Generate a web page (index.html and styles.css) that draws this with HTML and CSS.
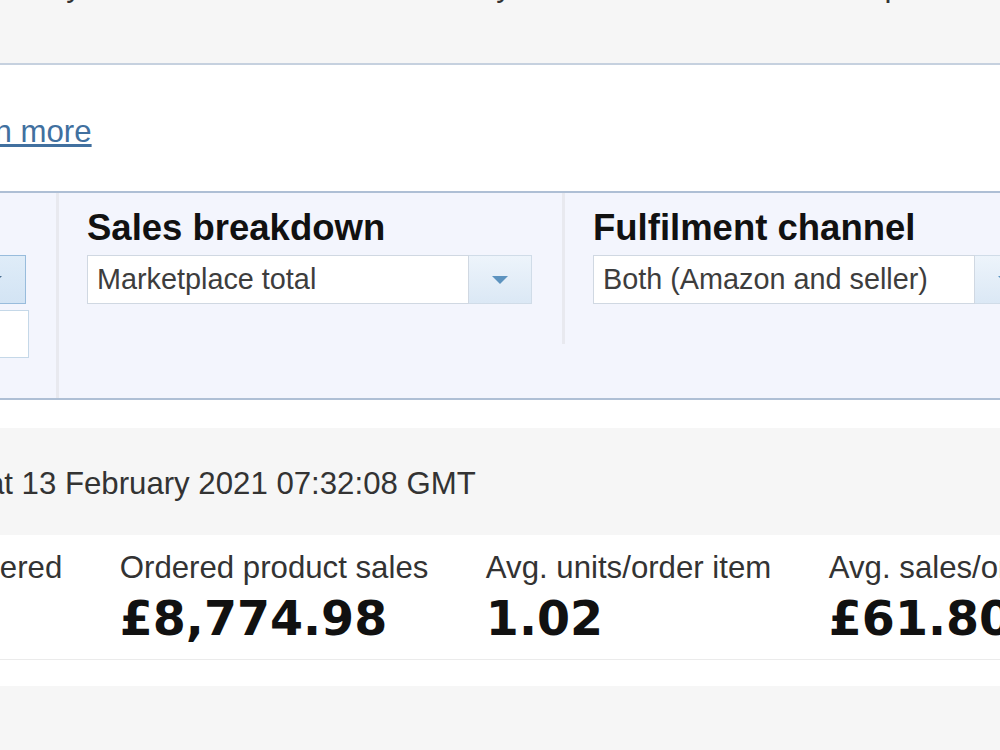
FILE: index.html
```html
<!DOCTYPE html>
<html lang="en">
<head>
    <meta charset="UTF-8">
    <meta name="viewport" content="width=device-width, initial-scale=1.0">
    <title>Sales Dashboard</title>
    <link rel="stylesheet" href="styles.css">
</head>
<body>

<div class="page">
    <div class="intro">
        <p>The snapshot is updated daily. All by the total orders for the last day and the sales in the last report.</p>
    </div>

    <div class="card">
        <p class="help">Data is refreshed hourly. <a href="#">Learn more</a></p>

        <div class="filters">
            <div class="filter">
                <label>Date</label>
                <div class="select focused">
                    <span class="select-text">Today so far</span>
                    <span class="select-btn"><b class="arrow"></b></span>
                </div>
                <input type="text" class="date-input">
            </div>
            <div class="filter">
                <label>Sales breakdown</label>
                <div class="select">
                    <span class="select-text">Marketplace total</span>
                    <span class="select-btn"><b class="arrow"></b></span>
                </div>
            </div>
            <div class="filter">
                <label>Fulfilment channel</label>
                <div class="select">
                    <span class="select-text">Both (Amazon and seller)</span>
                    <span class="select-btn"><b class="arrow"></b></span>
                </div>
            </div>
        </div>
    </div>

    <div class="snapshot">Sales snapshot taken at 13 February 2021 07:32:08 GMT</div>

    <div class="metrics">
        <div class="metric">
            <div class="metric-label">Total order items</div>
            <div class="metric-value">140</div>
        </div>
        <div class="metric">
            <div class="metric-label">Units ordered</div>
            <div class="metric-value">142</div>
        </div>
        <div class="metric">
            <div class="metric-label">Ordered product sales</div>
            <div class="metric-value">£8,774.98</div>
        </div>
        <div class="metric">
            <div class="metric-label">Avg. units/order item</div>
            <div class="metric-value">1.02</div>
        </div>
        <div class="metric">
            <div class="metric-label">Avg. sales/order item</div>
            <div class="metric-value">£61.80</div>
        </div>
    </div>
    <div class="spacer"></div>
</div>

</body>
</html>
```

FILE: styles.css
```css
html, body {
    margin: 0;
    background: #f6f6f6;
    overflow: hidden;
}

body {
    font-family: "Liberation Sans", Arial, sans-serif;
    font-size: 31.2px;
    line-height: 36px;
    color: #333;
}

/* page is wider than the window, left part scrolled out */
.page {
    width: 1500px;
    margin-left: -447px;
}

.intro {
    padding: 0 25px 59px;
    border-bottom: 2px solid #c6d1df;
}

.intro p {
    margin: -32px 0 0;
    white-space: nowrap;
}

.card {
    background: #fff;
    padding: 49px 0 28px;
}

.help {
    margin: 0 0 41px;
    padding: 0 25px 0 33px;
    white-space: nowrap;
}

.help a {
    color: #41709f;
}

/* filter bar */
.filters {
    display: flex;
    align-items: flex-start;
    background: #f3f5fd;
    border-top: 2px solid #aebfd5;
    border-bottom: 2px solid #aebfd5;
}

.filter {
    flex: none;
    width: 445px;
    padding: 15px 30px 40px 28px;
    border-right: 3px solid #e8e9ef;
}

.filter label {
    display: block;
    font-size: 36.5px;
    line-height: 40px;
    font-weight: bold;
    color: #111;
    margin-bottom: 7px;
    white-space: nowrap;
}

.select {
    display: flex;
    height: 49px;
}

.select-text {
    flex: 1;
    background: #fff;
    border: 1px solid #d0d8e2;
    padding-left: 9px;
    font-size: 28.8px;
    line-height: 47px;
    color: #3d3d3d;
    white-space: nowrap;
}

.select-btn {
    flex: none;
    width: 62px;
    display: flex;
    align-items: center;
    justify-content: center;
    border: 1px solid #d0dce8;
    border-left: none;
    background: linear-gradient(#edf4fb, #dbe8f5);
}

.arrow {
    width: 0;
    height: 0;
    border-left: 8px solid transparent;
    border-right: 8px solid transparent;
    border-top: 8px solid #5d93bf;
}

.select.focused .select-text,
.select.focused .select-btn {
    border-color: #98bcdc;
}

.select.focused .select-btn {
    border-left: 1px solid #98bcdc;
    background: linear-gradient(#dfecf8, #d3e4f4);
}

.select.focused .arrow {
    border-top-color: #4a6f91;
}

.date-input {
    display: block;
    box-sizing: border-box;
    width: 448px;
    height: 48px;
    margin-top: 6px;
    border: 1px solid #c5d8e8;
    background: #fff;
}

/* snapshot time */
.snapshot {
    padding: 38px 25px 33px 127px;
    white-space: nowrap;
}

/* key numbers */
.metrics {
    display: flex;
    gap: 57.5px;
    background: #fff;
    padding: 15px 25px 13px 34px;
    border-bottom: 1px solid #ebebeb;
}

.metric {
    flex: none;
    white-space: nowrap;
}

.metric-value {
    margin-top: 6px;
    font-family: "DejaVu Sans", Verdana, sans-serif;
    font-weight: bold;
    font-size: 47.5px;
    line-height: 54px;
    color: #111;
}

.spacer {
    background: #fff;
    height: 26px;
}
```
